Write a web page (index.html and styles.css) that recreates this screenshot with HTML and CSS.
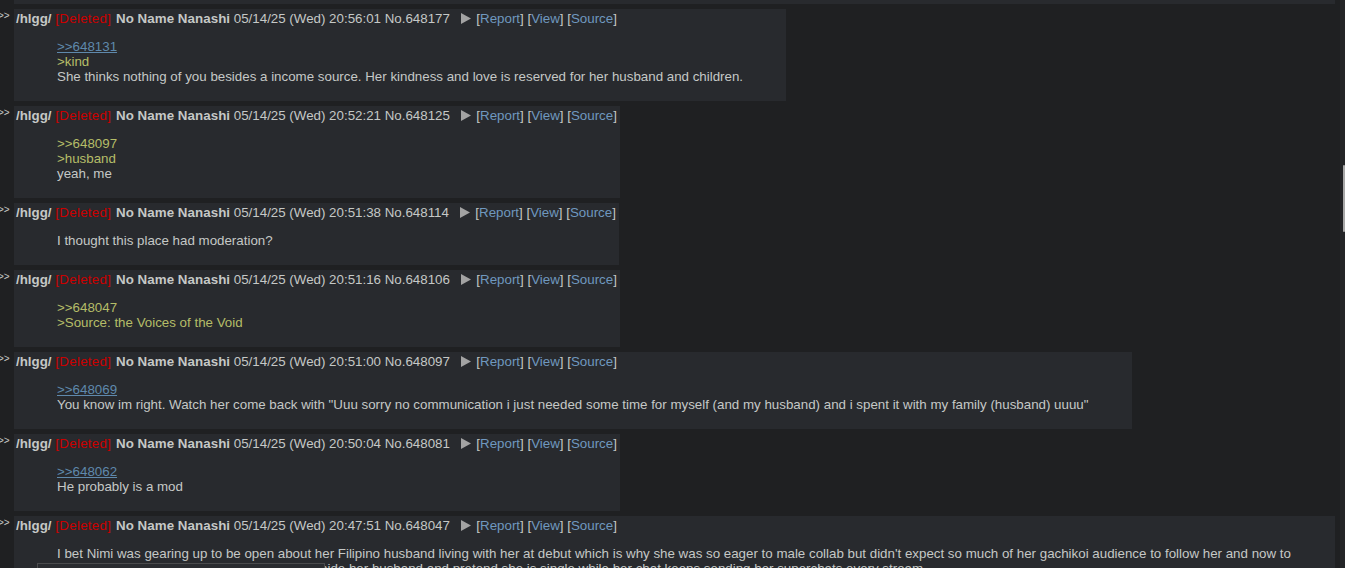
FILE: index.html
```html
<!DOCTYPE html>
<html lang="en">

<head>
  <meta charset="UTF-8">
  <meta name="viewport" content="width=device-width, initial-scale=1.0">
  <title>/hlgg/ - Deleted posts</title>
  <link rel="stylesheet" href="styles.css">
</head>

<body>
  <div class="thread">
    <div class="post-tail"></div>

    <div class="reply-row">
      <div class="side-arrows">&gt;&gt;</div>
      <div class="post">
        <div class="post-info">
          <span class="board">/hlgg/</span>
          <span class="deleted">[Deleted]</span>
          <span class="name">No Name Nanashi</span>
          <span class="date">05/14/25 (Wed) 20:56:01</span>
          <span class="post-num">No.648177</span>
          <span class="menu-arrow"><svg width="10" height="11" viewBox="0 0 10 11"><path d="M0 0 L10 5.5 L0 11 Z" fill="#a3a3a3"/></svg></span>
          <span class="links">[<a href="#">Report</a>] [<a href="#">View</a>] [<a href="#">Source</a>]</span>
        </div>
        <blockquote class="message">
          <a href="#" class="quotelink">&gt;&gt;648131</a><br>
          <span class="quote">&gt;kind</span><br>
          She thinks nothing of you besides a income source. Her kindness and love is reserved for her husband and children.
        </blockquote>
      </div>
    </div>

    <div class="reply-row">
      <div class="side-arrows">&gt;&gt;</div>
      <div class="post">
        <div class="post-info">
          <span class="board">/hlgg/</span>
          <span class="deleted">[Deleted]</span>
          <span class="name">No Name Nanashi</span>
          <span class="date">05/14/25 (Wed) 20:52:21</span>
          <span class="post-num">No.648125</span>
          <span class="menu-arrow"><svg width="10" height="11" viewBox="0 0 10 11"><path d="M0 0 L10 5.5 L0 11 Z" fill="#a3a3a3"/></svg></span>
          <span class="links">[<a href="#">Report</a>] [<a href="#">View</a>] [<a href="#">Source</a>]</span>
        </div>
        <blockquote class="message">
          <span class="quote">&gt;&gt;648097</span><br>
          <span class="quote">&gt;husband</span><br>
          yeah, me
        </blockquote>
      </div>
    </div>

    <div class="reply-row">
      <div class="side-arrows">&gt;&gt;</div>
      <div class="post">
        <div class="post-info">
          <span class="board">/hlgg/</span>
          <span class="deleted">[Deleted]</span>
          <span class="name">No Name Nanashi</span>
          <span class="date">05/14/25 (Wed) 20:51:38</span>
          <span class="post-num">No.648114</span>
          <span class="menu-arrow"><svg width="10" height="11" viewBox="0 0 10 11"><path d="M0 0 L10 5.5 L0 11 Z" fill="#a3a3a3"/></svg></span>
          <span class="links">[<a href="#">Report</a>] [<a href="#">View</a>] [<a href="#">Source</a>]</span>
        </div>
        <blockquote class="message">
          I thought this place had moderation?
        </blockquote>
      </div>
    </div>

    <div class="reply-row">
      <div class="side-arrows">&gt;&gt;</div>
      <div class="post">
        <div class="post-info">
          <span class="board">/hlgg/</span>
          <span class="deleted">[Deleted]</span>
          <span class="name">No Name Nanashi</span>
          <span class="date">05/14/25 (Wed) 20:51:16</span>
          <span class="post-num">No.648106</span>
          <span class="menu-arrow"><svg width="10" height="11" viewBox="0 0 10 11"><path d="M0 0 L10 5.5 L0 11 Z" fill="#a3a3a3"/></svg></span>
          <span class="links">[<a href="#">Report</a>] [<a href="#">View</a>] [<a href="#">Source</a>]</span>
        </div>
        <blockquote class="message">
          <span class="quote">&gt;&gt;648047</span><br>
          <span class="quote">&gt;Source: the Voices of the Void</span>
        </blockquote>
      </div>
    </div>

    <div class="reply-row">
      <div class="side-arrows">&gt;&gt;</div>
      <div class="post">
        <div class="post-info">
          <span class="board">/hlgg/</span>
          <span class="deleted">[Deleted]</span>
          <span class="name">No Name Nanashi</span>
          <span class="date">05/14/25 (Wed) 20:51:00</span>
          <span class="post-num">No.648097</span>
          <span class="menu-arrow"><svg width="10" height="11" viewBox="0 0 10 11"><path d="M0 0 L10 5.5 L0 11 Z" fill="#a3a3a3"/></svg></span>
          <span class="links">[<a href="#">Report</a>] [<a href="#">View</a>] [<a href="#">Source</a>]</span>
        </div>
        <blockquote class="message">
          <a href="#" class="quotelink">&gt;&gt;648069</a><br>
          You know im right. Watch her come back with "Uuu sorry no communication i just needed some time for myself (and my husband) and i spent it with my family (husband) uuuu"
        </blockquote>
      </div>
    </div>

    <div class="reply-row">
      <div class="side-arrows">&gt;&gt;</div>
      <div class="post">
        <div class="post-info">
          <span class="board">/hlgg/</span>
          <span class="deleted">[Deleted]</span>
          <span class="name">No Name Nanashi</span>
          <span class="date">05/14/25 (Wed) 20:50:04</span>
          <span class="post-num">No.648081</span>
          <span class="menu-arrow"><svg width="10" height="11" viewBox="0 0 10 11"><path d="M0 0 L10 5.5 L0 11 Z" fill="#a3a3a3"/></svg></span>
          <span class="links">[<a href="#">Report</a>] [<a href="#">View</a>] [<a href="#">Source</a>]</span>
        </div>
        <blockquote class="message">
          <a href="#" class="quotelink">&gt;&gt;648062</a><br>
          He probably is a mod
        </blockquote>
      </div>
    </div>

    <div class="reply-row">
      <div class="side-arrows">&gt;&gt;</div>
      <div class="post">
        <div class="post-info">
          <span class="board">/hlgg/</span>
          <span class="deleted">[Deleted]</span>
          <span class="name">No Name Nanashi</span>
          <span class="date">05/14/25 (Wed) 20:47:51</span>
          <span class="post-num">No.648047</span>
          <span class="menu-arrow"><svg width="10" height="11" viewBox="0 0 10 11"><path d="M0 0 L10 5.5 L0 11 Z" fill="#a3a3a3"/></svg></span>
          <span class="links">[<a href="#">Report</a>] [<a href="#">View</a>] [<a href="#">Source</a>]</span>
        </div>
        <blockquote class="message">
          I bet Nimi was gearing up to be open about her Filipino husband living with her at debut which is why she was so eager to male collab but didn't expect so much of her gachikoi audience to follow her and now to keep the gachikoi money coming she has to hide her husband and pretend she is single while her chat keeps sending her superchats every stream
        </blockquote>
      </div>
    </div>
  </div>

  <!-- bottom bar and scrollbar drawn over the page -->
  <div class="bottom-bar"></div>
  <div class="scroll-track">
    <div class="scroll-thumb"></div>
  </div>
</body>

</html>
```

FILE: styles.css
```css
html,
body {
  margin: 0;
  height: 568px;
  overflow: hidden;
}

body {
  background-color: #1f2022;
  color: #c5c8c6;
  font-family: "Liberation Sans", Arial, sans-serif;
  font-size: 10pt;
}

.thread {
  display: flex;
  flex-direction: column;
  align-items: flex-start;
  gap: 5px;
  width: 1335px;
}

.post-tail {
  height: 4px;
  margin-left: 14px;
  width: 1321px;
  background-color: #282a2e;
}

.reply-row {
  display: flex;
  align-items: flex-start;
  max-width: 1335px;
}

.side-arrows {
  flex: 0 0 16px;
  margin-left: -2px;
  padding-top: 2px;
  font-size: 10px;
  line-height: 10px;
  color: #c5c8c6;
}

.post {
  background-color: #282a2e;
  padding: 2px 3px 0 2px;
  min-width: 0;
}

.post-info {
  height: 16px;
  line-height: 16px;
  white-space: nowrap;
}

.board,
.name {
  font-weight: bold;
  color: #c5c8c6;
}

.deleted {
  color: #cc0000;
  letter-spacing: 0.3px;
  margin-right: 1px;
}

.name {
  letter-spacing: 0.05px;
}

.menu-arrow {
  display: inline-block;
  margin: 0 2px 0 7px;
  vertical-align: -1px;
}

.links {
  color: #c5c8c6;
}

.links a {
  color: #6f98bf;
  text-decoration: none;
}

.message {
  margin: 12px 40px 17px 41px;
  line-height: 15px;
}

.quotelink {
  color: #5f89ac;
  text-decoration: underline;
}

.quote {
  color: #b5bd68;
}

.bottom-bar {
  position: fixed;
  left: 37px;
  bottom: 0;
  width: 286px;
  height: 4px;
  background-color: #2a2c30;
  border: 1px solid #4a4b4d;
  border-bottom: none;
}

.scroll-track {
  position: fixed;
  top: 0;
  right: 0;
  width: 5px;
  height: 568px;
  background-color: #242527;
}

.scroll-thumb {
  position: absolute;
  top: 165px;
  right: 0;
  width: 2px;
  height: 67px;
  background-color: #a8a8a8;
  border-radius: 1px;
}
```
